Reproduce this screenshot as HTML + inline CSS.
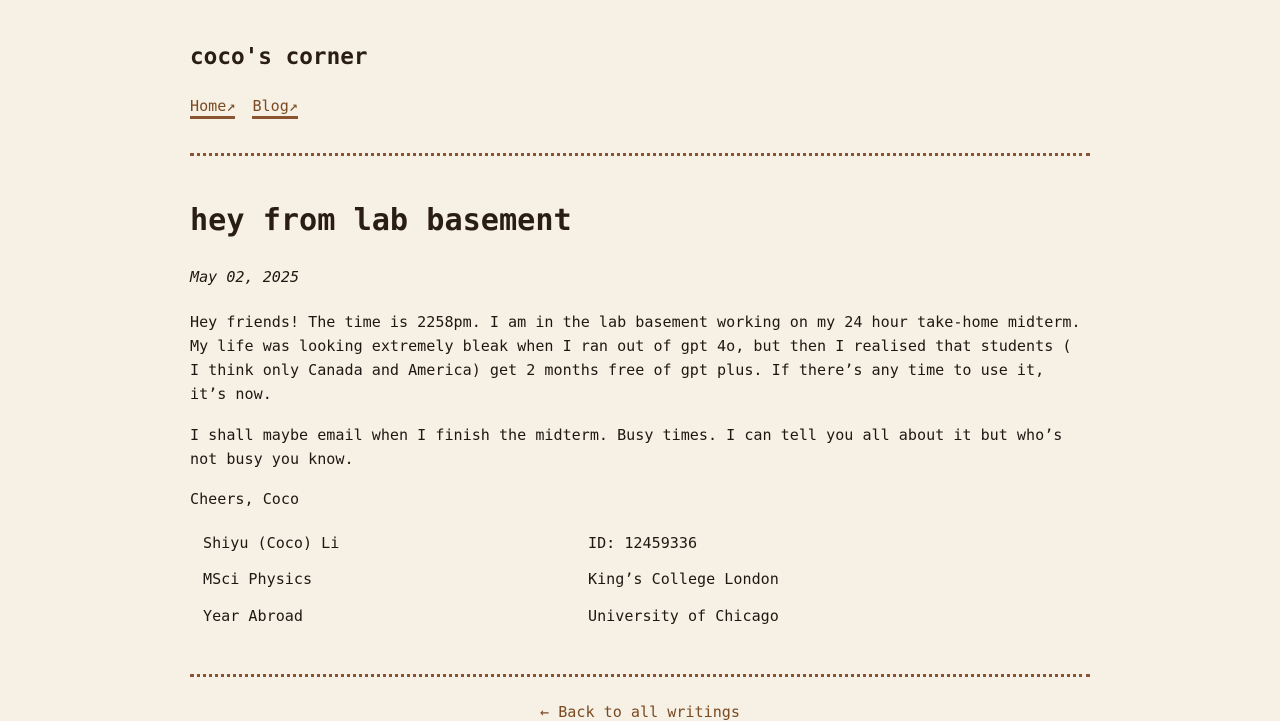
<!DOCTYPE html>
<html><head><meta charset="utf-8"><style>
html,body{margin:0;padding:0;background:#f7f0e4;}
body{width:1280px;height:720px;overflow:hidden;position:relative;font-family:"DejaVu Sans Mono","Liberation Mono",monospace;color:#1e1712;font-size:15.1px;}
.a{position:absolute;left:190px;white-space:nowrap;}
.t{top:44px;font-size:22.7px;font-weight:bold;color:#2a1e14;}
.nav{top:96px;}
.nav span{color:#7a4a22;border-bottom:3px solid #8b5430;display:inline-block;line-height:20px;margin-right:17px;}
.hr{position:absolute;left:190px;width:900px;border-top:3px dotted #8b5430;}
h1{position:absolute;left:190px;top:201px;margin:0;font-size:30.2px;font-weight:bold;color:#2a1e14;line-height:40px;}
.d{top:268px;font-style:italic;}
p{position:absolute;left:190px;width:920px;margin:0;line-height:24px;}
.r{position:absolute;white-space:nowrap;}
.back{position:absolute;top:703px;left:0;width:1280px;text-align:center;color:#7a4a22;}
</style></head><body>
<div class="a t">coco's corner</div>
<div class="a nav"><span>Home↗</span><span>Blog↗</span></div>
<div class="hr" style="top:153px"></div>
<h1>hey from lab basement</h1>
<div class="a d">May 02, 2025</div>
<p style="top:310px">Hey friends! The time is 2258pm. I am in the lab basement working on my 24 hour take-home midterm.<br>My life was looking extremely bleak when I ran out of gpt 4o, but then I realised that students (<br>I think only Canada and America) get 2 months free of gpt plus. If there’s any time to use it,<br>it’s now.</p>
<p style="top:423px">I shall maybe email when I finish the midterm. Busy times. I can tell you all about it but who’s<br>not busy you know.</p>
<p style="top:487px">Cheers, Coco</p>
<div class="r" style="left:203px;top:534px">Shiyu (Coco) Li</div>
<div class="r" style="left:588px;top:534px">ID: 12459336</div>
<div class="r" style="left:203px;top:570px">MSci Physics</div>
<div class="r" style="left:588px;top:570px">King’s College London</div>
<div class="r" style="left:203px;top:607px">Year Abroad</div>
<div class="r" style="left:588px;top:607px">University of Chicago</div>
<div class="hr" style="top:674px"></div>
<div class="back">← Back to all writings</div>
</body></html>
